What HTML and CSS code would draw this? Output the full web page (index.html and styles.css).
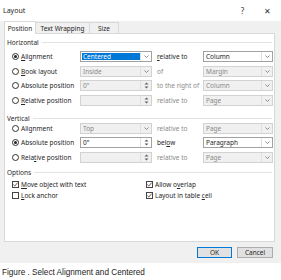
FILE: index.html
```html
<!DOCTYPE html>
<html lang="en">
<head>
  <meta charset="UTF-8" />
  <title>Layout</title>
  <link rel="stylesheet" href="styles.css">
</head>
<body>

  <div class="dialog">
    <div class="titlebar">
      <span class="title">Layout</span>
      <span class="tbtn">?</span>
      <span class="tbtn close">&#x2715;</span>
    </div>

    <div class="tabs">
      <div class="tab active">Position</div>
      <div class="tab wide">Text Wrapping</div>
      <div class="tab small">Size</div>
    </div>

    <div class="panel">
      <!-- Horizontal -->
      <div class="group-title first">Horizontal</div>
      <div class="grid">
        <div class="opt"><span class="radio on"></span><span><u>A</u>lignment</span></div>
        <div class="select"><span class="val"><span class="sel">Centered</span></span><span class="arrow"></span></div>
        <div class="mid"><span><u>r</u>elative to</span></div>
        <div class="select"><span class="val">Column</span><span class="arrow"></span></div>

        <div class="opt"><span class="radio"></span><span><u>B</u>ook layout</span></div>
        <div class="select off"><span class="val">Inside</span><span class="arrow"></span></div>
        <div class="mid off">of</div>
        <div class="select off"><span class="val">Margin</span><span class="arrow"></span></div>

        <div class="opt"><span class="radio"></span><span>Absolute position</span></div>
        <div class="select off"><span class="val">0"</span><span class="spin"></span></div>
        <div class="mid off">to the right of</div>
        <div class="select off"><span class="val">Column</span><span class="arrow"></span></div>

        <div class="opt"><span class="radio"></span><span><u>R</u>elative position</span></div>
        <div class="select off"><span class="val"></span><span class="spin"></span></div>
        <div class="mid off">relative to</div>
        <div class="select off"><span class="val">Page</span><span class="arrow"></span></div>
      </div>

      <!-- Vertical -->
      <div class="group-title vert">Vertical</div>
      <div class="grid">
        <div class="opt"><span class="radio"></span><span>Ali<u>g</u>nment</span></div>
        <div class="select off"><span class="val">Top</span><span class="arrow"></span></div>
        <div class="mid off">relative to</div>
        <div class="select off"><span class="val">Page</span><span class="arrow"></span></div>

        <div class="opt"><span class="radio on"></span><span>Absolute position</span></div>
        <div class="select"><span class="val">0"</span><span class="spin"></span></div>
        <div class="mid"><span>bel<u>o</u>w</span></div>
        <div class="select"><span class="val">Paragraph</span><span class="arrow"></span></div>

        <div class="opt"><span class="radio"></span><span>Rela<u>t</u>ive position</span></div>
        <div class="select off"><span class="val"></span><span class="spin"></span></div>
        <div class="mid off">relative to</div>
        <div class="select off"><span class="val">Page</span><span class="arrow"></span></div>
      </div>

      <!-- Options -->
      <div class="group-title opts">Options</div>
      <div class="checks">
        <div class="opt"><span class="check on"></span><span><u>M</u>ove object with text</span></div>
        <div class="opt"><span class="check on"></span><span>Allow o<u>v</u>erlap</span></div>
        <div class="opt"><span class="check"></span><span><u>L</u>ock anchor</span></div>
        <div class="opt"><span class="check on"></span><span>Layout in table <u>c</u>ell</span></div>
      </div>
    </div>

    <div class="footer">
      <div class="btn default">OK</div>
      <div class="btn">Cancel</div>
    </div>
  </div>

  <p class="caption">Figure . Select Alignment and Centered</p>

</body>
</html>
```

FILE: styles.css
```css
* {
  box-sizing: border-box;
}

body {
  margin: 0;
  background: #fff;
  font-family: "Noto Sans", sans-serif;
  font-size: 6.5px;
  color: #262626;
}

.dialog {
  background: #f0f0f0;
  height: 263px;
  display: flex;
  flex-direction: column;
}

.titlebar {
  height: 21px;
  background: #fff;
  display: flex;
  align-items: center;
  padding-left: 3px;
  font-size: 7px;
}

.title {
  flex: 1;
}

.tbtn {
  width: 25px;
  text-align: center;
  font-size: 8px;
  color: #333;
}

.tbtn.close {
  margin-right: 1px;
}

.tabs {
  display: flex;
  align-items: flex-end;
  height: 12px;
  padding-left: 4px;
  position: relative;
  z-index: 1;
}

.tab {
  height: 11px;
  width: 32px;
  border: 1px solid #d9d9d9;
  border-bottom: none;
  background: #f0f0f0;
  display: flex;
  align-items: center;
  justify-content: center;
  margin-left: -1px;
}

.tab.active {
  height: 13px;
  margin-bottom: -1px;
  background: #fff;
  margin-left: 0;
  padding-top: 1px;
}

.tab.wide {
  width: 55px;
}

.tab.small {
  width: 30px;
}

.panel {
  margin: 0 6px 0 4px;
  height: 209px;
  background: #fff;
  border: 1px solid #d9d9d9;
  padding: 4px 2px 0 2px;
}

.group-title {
  display: flex;
  align-items: center;
  height: 9px;
}

.group-title::after {
  content: "";
  flex: 1;
  height: 1px;
  background: #e3e3e3;
  margin-left: 3px;
}

.group-title.vert {
  margin-top: 8px;
}

.group-title.opts {
  margin-top: 5px;
}

.grid {
  display: grid;
  grid-template-columns: 68px 72px 51px 70px;
  grid-auto-rows: 11px;
  row-gap: 3.5px;
  margin-left: 5px;
}

.group-title.first + .grid {
  margin-top: 4px;
}

.opt {
  display: flex;
  align-items: center;
  white-space: nowrap;
}

.radio {
  width: 7px;
  height: 7px;
  border: 1px solid #333;
  border-radius: 50%;
  margin-right: 2px;
  display: flex;
  align-items: center;
  justify-content: center;
  flex: none;
}

.radio.on::after {
  content: "";
  width: 3px;
  height: 3px;
  border-radius: 50%;
  background: #222;
}

.select {
  display: flex;
  border: 1px solid #a2a2a2;
  background: #fff;
}

.select.off {
  border-color: #d2d2d2;
  background: #f0f0f0;
  color: #8a8a8a;
}

.val {
  flex: 1;
  display: flex;
  align-items: center;
  padding-left: 2px;
  white-space: nowrap;
  overflow: hidden;
}

.sel {
  background: #0078d7;
  color: #fff;
  align-self: stretch;
  flex: 1;
  display: flex;
  align-items: center;
  padding-left: 1px;
  margin: 1px 0 1px -1px;
}

.arrow,
.spin {
  width: 11px;
  flex: none;
  border-left: 1px solid #e0e0e0;
  background: no-repeat center;
}

.arrow {
  background-image: url("data:image/svg+xml,%3Csvg xmlns='http://www.w3.org/2000/svg' width='5' height='3'%3E%3Cpath d='M0.5 0.5 L2.5 2.5 L4.5 0.5' fill='none' stroke='%23707070' stroke-width='0.8'/%3E%3C/svg%3E");
}

.spin {
  background-image: url("data:image/svg+xml,%3Csvg xmlns='http://www.w3.org/2000/svg' width='5' height='7'%3E%3Cpath d='M0.5 2.5 L2.5 0.5 L4.5 2.5Z M0.5 4.5 L2.5 6.5 L4.5 4.5Z' fill='%23606060'/%3E%3C/svg%3E");
}

.mid {
  display: flex;
  align-items: center;
  padding-left: 5px;
  white-space: nowrap;
}

.mid.off {
  color: #8a8a8a;
}

.checks {
  display: grid;
  grid-template-columns: 134px 1fr;
  grid-auto-rows: 11px;
  margin: 2px 0 0 5px;
}

.check {
  width: 7px;
  height: 7px;
  border: 1px solid #444;
  margin-right: 2px;
  flex: none;
}

.check.on {
  background: no-repeat center url("data:image/svg+xml,%3Csvg xmlns='http://www.w3.org/2000/svg' width='5' height='5'%3E%3Cpath d='M0.3 2.6 L1.8 4 L4.7 0.6' fill='none' stroke='%23333' stroke-width='0.8'/%3E%3C/svg%3E");
}

.footer {
  display: flex;
  justify-content: flex-end;
  gap: 5px;
  padding: 5px 8px 0 0;
}

.btn {
  width: 36px;
  height: 11px;
  border: 1px solid #adadad;
  background: #e1e1e1;
  display: flex;
  align-items: center;
  justify-content: center;
}

.btn.default {
  width: 35px;
  border-color: #0078d7;
}

.caption {
  margin: 5px 0 0 2px;
  font-family: "Liberation Sans", sans-serif;
  font-size: 8.2px;
  color: #222;
}
```
